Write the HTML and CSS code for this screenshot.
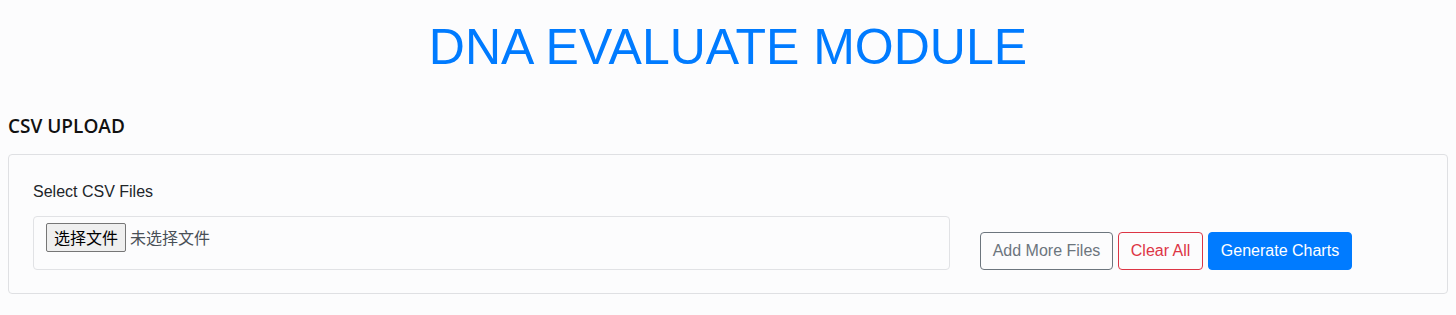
FILE: index.html
```html
<!DOCTYPE html>
<html lang="en">
<head>
    <meta charset="UTF-8">
    <meta name="viewport" content="width=device-width, initial-scale=1.0">
    <title>DNA Evaluate Module</title>
    <link rel="stylesheet" href="styles.css">
</head>
<body>
    <h1 class="title">DNA EVALUATE MODULE</h1>

    <section class="upload">
        <h4 class="sectionTitle">CSV UPLOAD</h4>
        <div class="card">
            <div class="row">
                <div class="colFile">
                    <label class="fieldLabel" for="csvFiles">Select CSV Files</label>
                    <div class="fileBox" id="csvFiles">
                        <span class="fileBtn">选择文件</span>
                        <span class="fileName">未选择文件</span>
                    </div>
                </div>
                <div class="colActions">
                    <button class="btn btnSecondary">Add More Files</button>
                    <button class="btn btnDanger">Clear All</button>
                    <button class="btn btnPrimary">Generate Charts</button>
                </div>
            </div>
        </div>
    </section>
</body>
</html>
```

FILE: styles.css
```css
* {
    margin: 0;
    padding: 0;
    box-sizing: border-box;
}
body {
    background-color: #fcfcfd;
    color: #212529;
    font-family: "Liberation Sans", Arial, sans-serif;
    font-size: 16px;
    line-height: 24px;
    padding: 0 8px;
}
.title {
    margin-top: 17px;
    font-size: 50px;
    line-height: 60px;
    font-weight: 400;
    text-align: center;
    color: #007bff;
}
.sectionTitle {
    margin-top: 37px;
    margin-bottom: 16px;
    font-family: "Open Sans", "Noto Sans", sans-serif;
    font-size: 19px;
    line-height: 24px;
    font-weight: 600;
    color: #111;
}
.card {
    border: 1px solid #dfe0e3;
    border-radius: 4px;
    padding: 25px 24px 23px;
}
.row {
    display: flex;
}
.colFile {
    width: 916.7px;
    flex-shrink: 0;
}
.fieldLabel {
    display: block;
    margin-bottom: 12px;
}
.fileBox {
    display: flex;
    align-items: flex-start;
    height: 54px;
    padding: 6px 12px;
    border: 1px solid #e1e2e5;
    border-radius: 4px;
    font-family: "Noto Sans CJK SC", "Liberation Sans", sans-serif;
}
.fileBtn {
    height: 29px;
    padding: 0 7px;
    line-height: 27px;
    border: 1px solid #767676;
    border-radius: 2px;
    background-color: #efefef;
    color: #000;
}
.fileName {
    margin-left: 4px;
    line-height: 29px;
    color: #495057;
}
.colActions {
    display: flex;
    align-items: flex-end;
    gap: 4.5px;
    padding-left: 30px;
}
.btn {
    padding: 6px 12px;
    font-family: "Liberation Sans", Arial, sans-serif;
    font-size: 16px;
    line-height: 24px;
    border: 1px solid;
    border-radius: 4px;
    background-color: transparent;
}
.btnSecondary {
    color: #6c757d;
    border-color: #6c757d;
}
.btnDanger {
    color: #dc3545;
    border-color: #dc3545;
}
.btnPrimary {
    color: #fff;
    background-color: #007bff;
    border-color: #007bff;
}
```
